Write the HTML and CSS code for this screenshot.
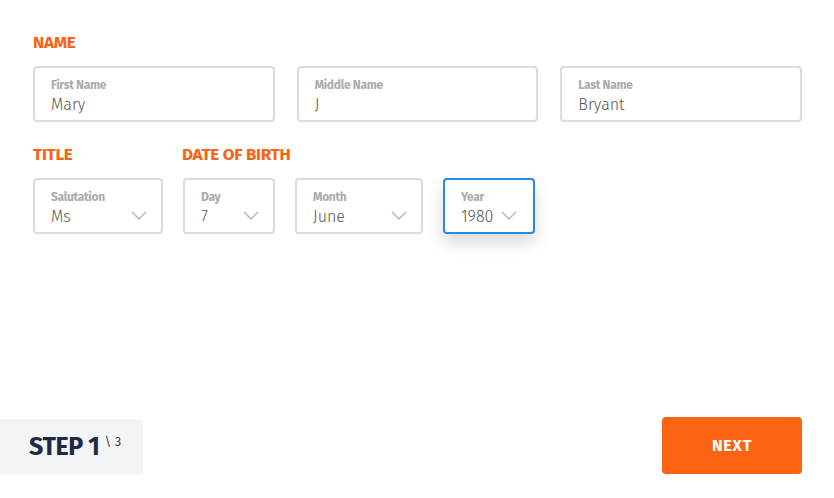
FILE: index.html
```html
<!DOCTYPE html>
<html lang="en">
<head>
<meta charset="utf-8">
<link rel="stylesheet" href="styles.css">
</head>
<body>
<div class="page">
  <div class="content">
    <div class="section-label">NAME</div>
    <div class="name-row">
      <div class="field"><div class="field-label">First Name</div><div class="field-value">Mary</div></div>
      <div class="field"><div class="field-label">Middle Name</div><div class="field-value">J</div></div>
      <div class="field"><div class="field-label">Last Name</div><div class="field-value">Bryant</div></div>
    </div>
    <div class="second-row">
      <div class="group group-title">
        <div class="section-label">TITLE</div>
        <div class="field select w-sal"><div class="field-label">Salutation</div><div class="field-value">Ms</div>
          <svg class="chev" viewBox="0 0 16 9"><path d="M1 1 L8 8 L15 1"/></svg></div>
      </div>
      <div class="group">
        <div class="section-label">DATE OF BIRTH</div>
        <div class="dob-row">
          <div class="field select w-day"><div class="field-label">Day</div><div class="field-value">7</div>
            <svg class="chev" viewBox="0 0 16 9"><path d="M1 1 L8 8 L15 1"/></svg></div>
          <div class="field select w-month"><div class="field-label">Month</div><div class="field-value">June</div>
            <svg class="chev" viewBox="0 0 16 9"><path d="M1 1 L8 8 L15 1"/></svg></div>
          <div class="field select w-year focused"><div class="field-label">Year</div><div class="field-value">1980</div>
            <svg class="chev" viewBox="0 0 16 9"><path d="M1 1 L8 8 L15 1"/></svg></div>
        </div>
      </div>
    </div>
  </div>
  <div class="footer">
    <div class="step"><span class="step-main">STEP 1</span><span class="step-total">\ 3</span></div>
    <button class="next">NEXT</button>
  </div>
</div>
</body>
</html>
```
FILE: styles.css
```css
* { box-sizing: border-box; }
html, body { margin: 0; padding: 0; background: #fff; }
body { font-family: "Fira Sans", "Open Sans", "Liberation Sans", sans-serif; }
.page { width: 834px; height: 498px; display: flex; flex-direction: column; }
.content { padding: 33px 32px 0 33px; }
.section-label { color: #f96313; font-weight: 700; font-size: 17px; line-height: 20px; height: 20px; margin-bottom: 13px; letter-spacing: -0.3px; white-space: nowrap; }
.name-row { display: grid; grid-template-columns: repeat(3, 1fr); gap: 22px; margin-bottom: 23px; }
.field { position: relative; height: 56px; border: 2px solid #dcdcdc; border-radius: 4px; padding: 10px 16px 0 16px; background: #fff; }
.field-label { font-size: 12px; font-weight: 700; color: #ababab; line-height: 14px; letter-spacing: -0.3px; }
.field-value { font-size: 16px; font-weight: 300; color: #555; line-height: 20px; margin-top: 3px; }
.second-row { display: flex; gap: 19px; }
.w-sal { width: 130px; }
.w-day { width: 92px; }
.w-month { width: 128px; }
.w-year { width: 92px; }
.dob-row { display: flex; gap: 20px; margin-left: 1px; }
.chev { position: absolute; right: 14px; top: 31px; width: 16px; height: 9px; fill: none; stroke: #b4b4b4; stroke-width: 1.4; }
.focused { border-color: #2c87ea; box-shadow: 0 9px 16px rgba(0,0,0,0.15); }
.focused .chev { right: 16px; }
.footer { margin-top: auto; display: flex; justify-content: space-between; align-items: flex-end; padding: 0 32px 24px 0; }
.step { width: 143px; height: 55px; background: #f3f4f6; display: flex; align-items: center; padding-left: 29px; }
.step-main { font-size: 25px; font-weight: 700; color: #1e2942; letter-spacing: -0.4px; }
.step-total { font-size: 13px; color: #444; margin-left: 5px; margin-top: -11px; }
.next { width: 140px; height: 57px; border: none; border-radius: 4px; background: #f96311; color: #fff; font-family: inherit; font-weight: 700; font-size: 16px; letter-spacing: 0.8px; padding: 0; }
```
